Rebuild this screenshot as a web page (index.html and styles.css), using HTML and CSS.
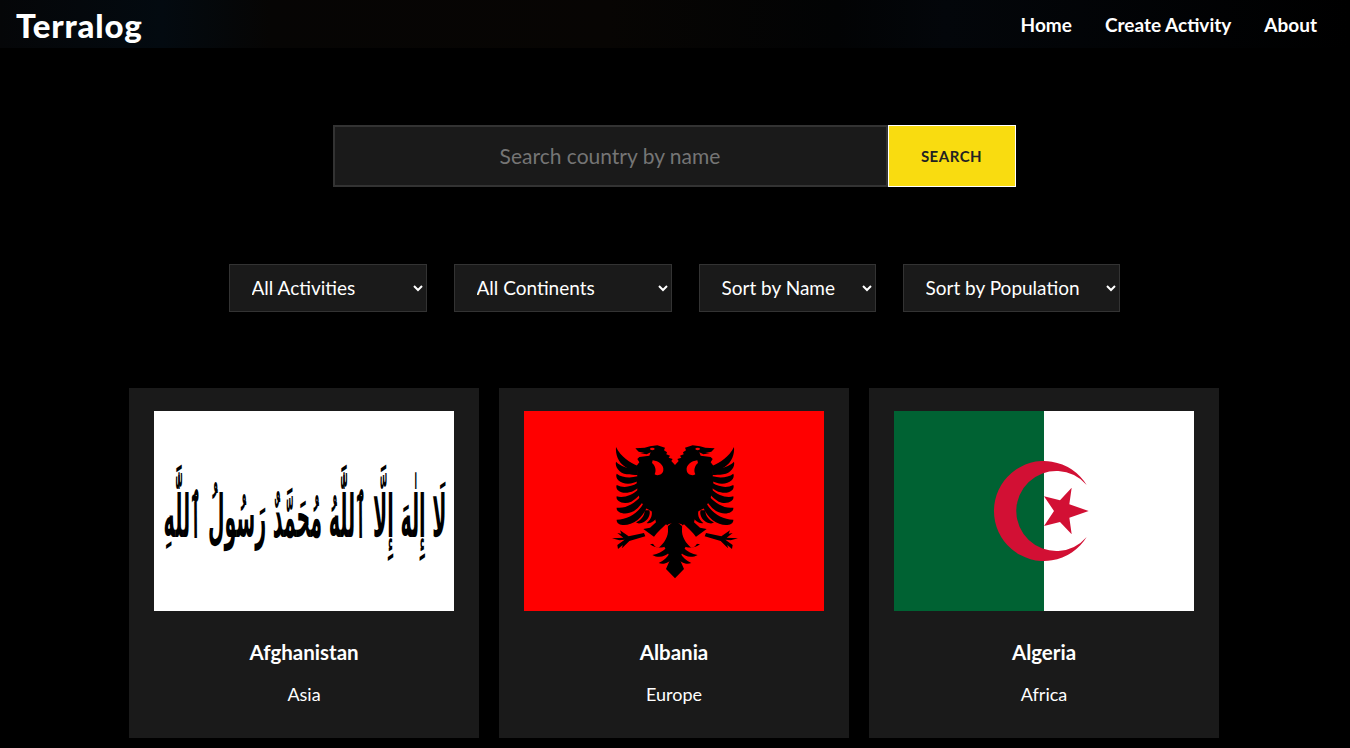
FILE: index.html
```html
<!DOCTYPE html>
<html lang="en">
<head>
<meta charset="utf-8">
<title>Terralog</title>
<link rel="stylesheet" href="styles.css">
</head>
<body>
<header class="topbar">
  <a class="logo" href="#">Terralog</a>
  <nav class="nav">
    <a href="#">Home</a>
    <a href="#">Create Activity</a>
    <a href="#">About</a>
  </nav>
</header>
<main class="page">
  <form class="search">
    <input class="search-input" type="text" placeholder="Search country by name">
    <button class="search-btn" type="button">SEARCH</button>
  </form>
  <div class="filters">
    <select class="filter f-activity"><option>All Activities</option></select>
    <select class="filter f-continent"><option>All Continents</option></select>
    <select class="filter f-name"><option>Sort by Name</option></select>
    <select class="filter f-pop"><option>Sort by Population</option></select>
  </div>
  <section class="cards">
    <article class="card">
      <svg class="flag" viewBox="0 0 300 200" role="img" aria-label="Flag of Afghanistan">
        <rect width="300" height="200" fill="#fff"/>
        <text class="shahada" lang="ar" transform="translate(151 126) scale(1.36 4.2)" text-anchor="middle" direction="rtl">لَا إِلٰهَ إِلَّا ٱللَّٰهُ مُحَمَّدٌ رَسُولُ ٱللَّٰهِ</text>
      </svg>
      <h2 class="name">Afghanistan</h2>
      <p class="continent">Asia</p>
    </article>
    <article class="card">
      <svg class="flag" viewBox="-228 -72 900 600" role="img" aria-label="Flag of Albania">
        <rect x="-228" y="-72" width="900" height="600" fill="#f00"/>
        <defs>
          <g id="eagle-half">
            <path d="M225 90 L214 78 L218 72 L206 68 L210 62 L199 58 L201 52 L192 46 L195 38 L172 31 L150 34 L134 38 L106 40 L116 50 L134 54 L120 55 L140 58 L152 52 L148 62 L118 66 L112 72 L118 82 L110 92 L112 118 L110 140 L112 165 L120 195 L135 218 L160 232 L168 262 L150 278 L130 282 L168 310 L205 268 L225 262 Z"/>
            <ellipse fill="#f00" cx="157" cy="42" rx="7" ry="3.5"/>
            <path fill="#f00" d="M158 76 C176 78 192 90 190 106 C188 120 172 124 164 118 C170 106 166 92 156 84 Z"/>
            <path d="M112 92 C92 84 62 66 48 36 C46 58 54 82 76 96 C88 104 100 106 112 106 Z"/>
            <path d="M112 100 C90 102 64 96 48 80 C44 96 58 114 80 118 C92 120 102 120 114 120 Z"/>
            <path d="M112 124 C90 130 66 128 50 116 C44 130 60 146 84 146 C96 146 106 142 114 138 Z"/>
            <path d="M112 144 C92 156 70 160 50 150 C44 166 66 178 88 172 C98 170 108 164 114 158 Z"/>
            <path d="M114 164 C96 180 72 190 50 184 C46 200 72 210 94 200 C104 194 114 186 120 178 Z"/>
            <path d="M122 184 C104 206 76 222 50 218 C48 234 78 242 102 228 C114 220 124 208 130 198 Z"/>
            <path d="M130 206 C114 234 84 254 50 254 C48 274 86 276 112 256 C126 244 136 228 142 214 Z"/>
            <path d="M134 226 C134 244 122 256 108 262 C116 270 138 262 146 246 C150 238 150 232 148 226 Z"/>
            <path d="M155 228 C158 244 150 256 140 264 C150 268 166 258 172 244 C176 238 176 232 176 232 Z"/>
            <path d="M150 328 C164 326 178 322 190 318 L200 332 C186 340 166 340 150 328 Z"/>
            <path d="M157 360 C174 358 188 350 198 340 L208 352 C196 366 174 370 157 360 Z"/>
            <path d="M176 384 C192 376 202 366 208 356 L218 368 C210 382 192 390 176 384 Z"/>
            <path d="M225 256 L205 272 L180 312 L198 344 L212 370 L198 402 L225 430 Z"/>
            <path fill="#f00" d="M198 268 C186 280 166 296 156 316 C158 330 168 340 176 338 C192 326 206 304 204 282 C204 274 202 270 198 268 Z"/>
            <path d="M132 294 L86 304 L60 286 L64 296 L52 294 L70 308 L36 310 L58 316 L74 314 L52 330 L54 342 L68 330 L66 340 L88 318 L136 304 Z"/>
          </g>
        </defs>
        <use href="#eagle-half"/>
        <use href="#eagle-half" transform="translate(450 0) scale(-1 1)"/>
      </svg>
      <h2 class="name">Albania</h2>
      <p class="continent">Europe</p>
    </article>
    <article class="card">
      <svg class="flag" viewBox="-258 -117 900 600" role="img" aria-label="Flag of Algeria">
        <rect x="192" y="-117" width="450" height="600" fill="#fff"/>
        <rect x="-258" y="-117" width="450" height="600" fill="#006233"/>
        <path fill="#d21034" d="M320 105 A150 150 0 1 0 320 261 A120 120 0 1 1 320 105 Z"/>
        <polygon fill="#d21034" points="326,183 268,203 275,253 240,216 192,228 222,183 192,139 240,151 275,113 268,163"/>
      </svg>
      <h2 class="name">Algeria</h2>
      <p class="continent">Africa</p>
    </article>
  </section>
</main>
</body>
</html>
```
FILE: styles.css
```css
* { box-sizing: border-box; }
html, body { margin: 0; background: #000; }
body {
  width: 1348px;
  color: #fff;
  font-family: "Lato", "Noto Sans", sans-serif;
}
a { color: inherit; text-decoration: none; }

.topbar {
  width: 1350px;
  height: 48px;
  display: flex;
  align-items: center;
  justify-content: space-between;
  padding: 0 33px 0 16px;
  background: linear-gradient(90deg, #050608 0, #030a10 12%, #060504 20%, #070503 45%, #020304 62%, #03060a 70%, #000 100%);
}
.logo { font-size: 33px; font-weight: 900; line-height: 48px; letter-spacing: 0.8px; position: relative; top: 1px; }
.nav { display: flex; gap: 33px; font-size: 19px; font-weight: 700; margin-top: 1px; }

.page { display: flex; flex-direction: column; align-items: center; }

.search { display: flex; margin-top: 77px; height: 62px; }
.search-input {
  width: 555px;
  height: 62px;
  background: #1a1a1a;
  border: 2px solid #333;
  color: #fff;
  font-family: inherit;
  font-size: 21px;
  text-align: center;
  padding: 0 2px 2px;
  outline: 0;
}
.search-input::placeholder { color: #757575; opacity: 1; }
.search-btn {
  width: 128px;
  height: 62px;
  background: #f9dc10;
  border: 1px solid #fff;
  color: #222;
  font-family: inherit;
  font-size: 15px;
  font-weight: 700;
  letter-spacing: 0.5px;
  padding: 0;
}

.filters { display: flex; gap: 27px; margin-top: 77px; }
.filter {
  height: 48px;
  background: #1a1a1a;
  border: 1px solid #333;
  border-radius: 0;
  color: #fff;
  font-family: inherit;
  font-size: 19px;
  padding: 0 0 2px 18px;
}
.f-activity { width: 198px; }
.f-continent { width: 218px; }
.f-name { width: 177px; }
.f-pop { width: 217px; }

.cards { display: grid; grid-template-columns: repeat(3, 350px); gap: 20px; margin-top: 76px; }
.card {
  height: 350px;
  background: #1a1a1a;
  display: flex;
  flex-direction: column;
  align-items: center;
  padding-top: 23px;
}
.flag { width: 300px; height: 200px; display: block; }
.shahada { font-family: "DejaVu Sans", sans-serif; font-weight: 700; font-size: 14px; fill: #000; }
.name { margin: 29px 0 0; font-size: 20.5px; line-height: 24px; font-weight: 700; }
.continent { margin: 18px 0 0; font-size: 18px; line-height: 24px; }
```
